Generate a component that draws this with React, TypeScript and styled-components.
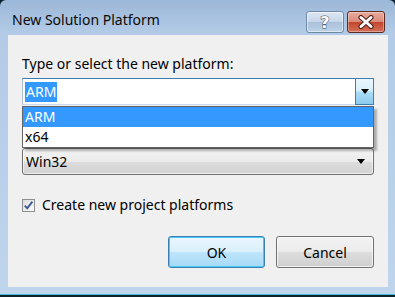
import React from 'react';
import styled, { createGlobalStyle } from 'styled-components';

const GlobalStyle = createGlobalStyle`
  html, body {
    margin: 0;
    padding: 0;
    background: #0c2230;
  }
  body {
    font-family: "Noto Sans", "Open Sans", sans-serif;
    color: #000;
  }
`;

const platforms = ['ARM', 'x64'];

export default function App() {
  return (
    <>
      <GlobalStyle />
      <Window>
        <TitleBar>
          <Title>New Solution Platform</Title>
          <CaptionButtons>
            <HelpButton>?</HelpButton>
            <CloseButton>
              <svg width="20" height="14" viewBox="0 0 20 14">
                <path d="M5 2.5 L15 11.5 M15 2.5 L5 11.5" stroke="#4a1e16" strokeWidth="5" strokeLinecap="round" />
                <path d="M5 2.5 L15 11.5 M15 2.5 L5 11.5" stroke="#ffffff" strokeWidth="3" strokeLinecap="round" />
              </svg>
            </CloseButton>
          </CaptionButtons>
        </TitleBar>
        <Client>
          <Label>Type or select the new platform:</Label>
          <EditCombo>
            <EditField>
              <Selected>ARM</Selected>
            </EditField>
            <DropButton>
              <Arrow />
            </DropButton>
          </EditCombo>
          {/* open drop-down list of the editable combo, covering the "copy from" label */}
          <DropList>
            {platforms.map((p, i) => (
              <ListItem key={p} $active={i === 0}>
                {p}
              </ListItem>
            ))}
          </DropList>
          <SelectBox>
            <span>Win32</span>
            <Arrow />
          </SelectBox>
          <CheckRow>
            <CheckBox>
              <svg width="11" height="11" viewBox="0 0 11 11">
                <path d="M1.8 5.6 L4.2 8.4 L9.4 1.6" stroke="#3a5593" strokeWidth="1.8" fill="none" />
              </svg>
            </CheckBox>
            <span>Create new project platforms</span>
          </CheckRow>
          <Footer>
            <PushButton $primary>OK</PushButton>
            <PushButton>Cancel</PushButton>
          </Footer>
        </Client>
      </Window>
    </>
  );
}

const Window = styled('div')`
  width: 395px;
  height: 295px;
  box-sizing: border-box;
  display: flex;
  flex-direction: column;
  padding: 0 7px 7px 8px;
  border-radius: 6px 6px 0 0;
  border-bottom: 1px solid #44bfd3;
  background: linear-gradient(to bottom, #9cb8d8 0, #b3cbe6 34px, #bfd5ee 100%);
`;

const TitleBar = styled('div')`
  height: 35px;
  flex: none;
  display: flex;
  justify-content: space-between;
  align-items: flex-start;
`;

const Title = styled('div')`
  margin: 11px 0 0 4px;
  font-size: 14px;
  line-height: 18px;
  color: #0a0a0a;
`;

const CaptionButtons = styled('div')`
  display: flex;
  gap: 3px;
  margin: 11px 3px 0 0;
`;

const CaptionButton = styled('div')`
  width: 38px;
  height: 22px;
  box-sizing: border-box;
  border-radius: 3px;
  display: flex;
  align-items: center;
  justify-content: center;
`;

const HelpButton = styled(CaptionButton)`
  border: 1px solid #6f88a6;
  background: linear-gradient(to bottom, #dde7f3 0, #c5d6e9 50%, #a9c0d8 50%, #bcd2e9 100%);
  box-shadow: inset 0 0 0 1px rgba(255, 255, 255, 0.5);
  font-family: "DejaVu Sans", sans-serif;
  font-weight: bold;
  font-size: 16px;
  color: #fff;
  -webkit-text-stroke: 1px #3d4e63;
  paint-order: stroke fill;
`;

const CloseButton = styled(CaptionButton)`
  border: 1px solid #5d2a22;
  background: linear-gradient(to bottom, #eaab9d 0, #d98a78 50%, #c2452c 50%, #d2705a 100%);
  box-shadow: inset 0 0 0 1px rgba(255, 255, 255, 0.35);
`;

const Client = styled('div')`
  flex: 1;
  position: relative;
  display: flex;
  flex-direction: column;
  padding: 19px 14px 0 14px;
  background: #f0f0f0;
  font-size: 14px;
`;

const Label = styled('div')`
  line-height: 20px;
  height: 20px;
`;

const EditCombo = styled('div')`
  margin-top: 4px;
  height: 27px;
  display: flex;
`;

const EditField = styled('div')`
  flex: 1;
  box-sizing: border-box;
  display: flex;
  align-items: center;
  padding-left: 2px;
  background: #fff;
  border: 1px solid;
  border-color: #3d7bad #a9bfd6 #c9dbec #a9bfd6;
  border-right: none;
`;

const Selected = styled('span')`
  background: #3399ff;
  color: #fff;
  line-height: 20px;
  padding: 0 1px;
`;

const DropButton = styled('div')`
  width: 19px;
  box-sizing: border-box;
  display: flex;
  align-items: center;
  justify-content: center;
  border: 1px solid #3c7fb1;
  background: linear-gradient(to bottom, #eaf6fd 0, #d9f0fc 45%, #a9dbf6 55%, #8ccbee 100%);
`;

const Arrow = styled('div')`
  width: 0;
  height: 0;
  border-left: 4px solid transparent;
  border-right: 4px solid transparent;
  border-top: 5px solid #000;
`;

const DropList = styled('div')`
  position: absolute;
  left: 14px;
  top: 71px;
  width: 352px;
  box-sizing: border-box;
  border: 1px solid #646464;
  background: #fff;
  box-shadow: 3px 3px 2px rgba(0, 0, 0, 0.28);
  z-index: 2;
`;

const ListItem = styled('div')<{ $active?: boolean }>`
  height: 20px;
  line-height: 20px;
  padding-left: 2px;
  background: ${({ $active }) => ($active ? '#3399ff' : '#fff')};
  color: ${({ $active }) => ($active ? '#fff' : '#000')};
`;

const SelectBox = styled('div')`
  margin-top: 43px;
  height: 27px;
  box-sizing: border-box;
  display: flex;
  align-items: center;
  justify-content: space-between;
  padding: 0 8px 0 3px;
  border: 1px solid #707070;
  border-radius: 3px;
  background: linear-gradient(to bottom, #f3f3f3 0, #ebebeb 50%, #dddddd 50%, #d2d2d2 100%);
  box-shadow: inset 0 0 0 1px rgba(255, 255, 255, 0.6);
`;

const CheckRow = styled('div')`
  margin-top: 22px;
  display: flex;
  align-items: center;
  gap: 7px;
  line-height: 16px;
`;

const CheckBox = styled('div')`
  width: 13px;
  height: 13px;
  box-sizing: border-box;
  border: 1px solid #8e8f8f;
  background: linear-gradient(135deg, #dcdcdc 0, #fbfbfb 100%);
  display: flex;
  align-items: center;
  justify-content: center;
`;

const Footer = styled('div')`
  margin-top: 23px;
  display: flex;
  justify-content: flex-end;
  gap: 11px;
`;

const PushButton = styled('div')<{ $primary?: boolean }>`
  width: ${({ $primary }) => ($primary ? '97px' : '98px')};
  height: 32px;
  box-sizing: border-box;
  display: flex;
  align-items: center;
  justify-content: center;
  border-radius: 3px;
  border: 1px solid ${({ $primary }) => ($primary ? '#3c7fb1' : '#707070')};
  background: ${({ $primary }) =>
    $primary
      ? 'linear-gradient(to bottom, #eaf6fd 0, #d9f0fc 50%, #bee6fd 50%, #a7d9f5 100%)'
      : 'linear-gradient(to bottom, #f2f2f2 0, #ebebeb 50%, #dddddd 50%, #cfcfcf 100%)'};
  box-shadow: inset 0 0 0 1px
    ${({ $primary }) => ($primary ? '#48c8f4' : 'rgba(255, 255, 255, 0.7)')};
`;
